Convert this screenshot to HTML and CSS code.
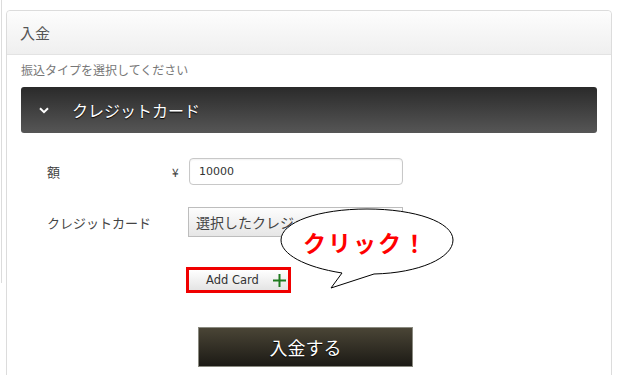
FILE: index.html
```html
<!DOCTYPE html>
<html lang="ja">
<head>
<meta charset="utf-8">
<link rel="stylesheet" href="styles.css">
</head>
<body>
<div class="page">
  <div class="edge"></div>
  <div class="panel">
    <div class="panel-head">入金</div>
    <div class="panel-body">
      <div class="subtitle">振込タイプを選択してください</div>
      <div class="bar">
        <svg class="chev" width="10" height="7" viewBox="0 0 10 7"><path d="M1 1.2 L5 5.2 L9 1.2" fill="none" stroke="#fff" stroke-width="2"/></svg>
        <span class="bar-title">クレジットカード</span>
      </div>
      <div class="form">
        <div class="label">額</div>
        <div class="yen">¥</div>
        <div class="input">10000</div>
        <div class="label label2">クレジットカード</div>
        <div class="yen"></div>
        <div class="select">選択したクレジット</div>
      </div>
      <div class="add-wrap">
        <div class="add-btn"><span>Add Card</span><svg class="plus" width="15" height="15" viewBox="0 0 15 15"><path d="M7.5 1 V14 M1 7.5 H14" stroke="#1f7a1f" stroke-width="2"/></svg></div>
        <div class="bubble">
          <svg class="bubble-shape" width="180" height="86" viewBox="0 0 180 86"><path d="M63 66 C25 60 2 47 2 33 C2 15 40 2 88 2 C136 2 174 15 174 33 C174 51 140 66 95 67 L52 81 Z" fill="#fff" stroke="#000" stroke-width="1"/></svg>
          <span class="bubble-text">クリック！</span>
        </div>
      </div>
      <div class="submit">入金する</div>
    </div>
  </div>
</div>
</body>
</html>
```

FILE: styles.css
```css
html, body {
  margin: 0;
  padding: 0;
  background: #fff;
}
body {
  font-family: "Noto Sans CJK JP", "DejaVu Sans", sans-serif;
  width: 640px;
  height: 375px;
  overflow: hidden;
}
.page {
  display: flex;
  align-items: flex-start;
}
.edge {
  width: 1px;
  height: 283px;
  margin-left: 1px;
  background: #dcdcdc;
  flex: none;
}
.panel {
  margin-left: 4px;
  margin-top: 10px;
  width: 606px;
  box-sizing: border-box;
  border: 1px solid #dcdcdc;
  border-radius: 4px 4px 0 0;
  height: 380px;
  flex: none;
}
.panel-head {
  height: 44px;
  box-sizing: border-box;
  border-bottom: 1px solid #e3e3e3;
  background: linear-gradient(#fdfdfd, #efefef);
  border-radius: 4px 4px 0 0;
  padding-left: 13px;
  font-size: 15px;
  line-height: 44px;
  color: #555;
}
.panel-body {
  padding: 7px 14px 0 14px;
}
.subtitle {
  font-size: 12px;
  line-height: 16px;
  color: #777;
  height: 16px;
}
.bar {
  margin-top: 9px;
  height: 46px;
  border-radius: 3px;
  background: linear-gradient(#2a2a2a, #565656);
  display: flex;
  align-items: center;
  color: #fff;
}
.chev {
  margin-left: 18px;
  margin-right: 23px;
}
.bar-title {
  font-size: 16px;
  text-shadow: 0 1px 1px #000;
}
.form {
  margin-top: 25px;
  padding-left: 26px;
  display: grid;
  grid-template-columns: 125px 17px 214px;
  grid-template-rows: 27px 30px;
  row-gap: 22px;
  align-items: center;
  font-size: 13px;
  color: #444;
}
.label {
  font-size: 13px;
  color: #444;
}
.yen {
  font-size: 12px;
  color: #444;
}
.input {
  height: 27px;
  box-sizing: border-box;
  border: 1px solid #c8c8c8;
  border-radius: 4px;
  padding-left: 9px;
  font-family: "DejaVu Sans", sans-serif;
  font-size: 11px;
  line-height: 25px;
  color: #333;
  box-shadow: inset 0 1px 2px rgba(0,0,0,0.06);
}
.select {
  height: 30px;
  box-sizing: border-box;
  margin-left: -1px;
  border: 1px solid #bdbdbd;
  background: linear-gradient(#fdfdfd, #e6e6e6);
  padding-left: 7px;
  font-size: 14px;
  line-height: 28px;
  color: #444;
  white-space: nowrap;
  overflow: hidden;
}
.add-wrap {
  margin-top: 30px;
  margin-left: 165px;
  height: 26px;
  position: relative;
}
.add-btn {
  width: 105px;
  height: 26px;
  box-sizing: border-box;
  border: 3px solid #f00000;
  background: linear-gradient(#ffffff, #e4e4e4);
  display: flex;
  align-items: center;
  font-family: "DejaVu Sans", sans-serif;
  font-size: 11.5px;
  color: #333;
}
.add-btn span {
  margin-left: 17px;
}
.plus {
  margin-left: 13px;
}
.bubble {
  position: absolute;
  left: 93px;
  top: -60px;
  width: 180px;
  height: 86px;
}
.bubble-shape {
  display: block;
}
.bubble-text {
  position: absolute;
  left: 24px;
  top: 19px;
  font-size: 23px;
  font-weight: bold;
  color: #f00;
  letter-spacing: 2px;
  line-height: 32px;
}
.submit {
  margin-top: 34px;
  margin-left: 177px;
  width: 215px;
  height: 40px;
  box-sizing: border-box;
  border: 1px solid #8a8a80;
  background: linear-gradient(#4a4536, #1c1a15);
  color: #fff;
  font-size: 18px;
  line-height: 38px;
  text-align: center;
  text-shadow: 0 1px 1px #000;
}
```
